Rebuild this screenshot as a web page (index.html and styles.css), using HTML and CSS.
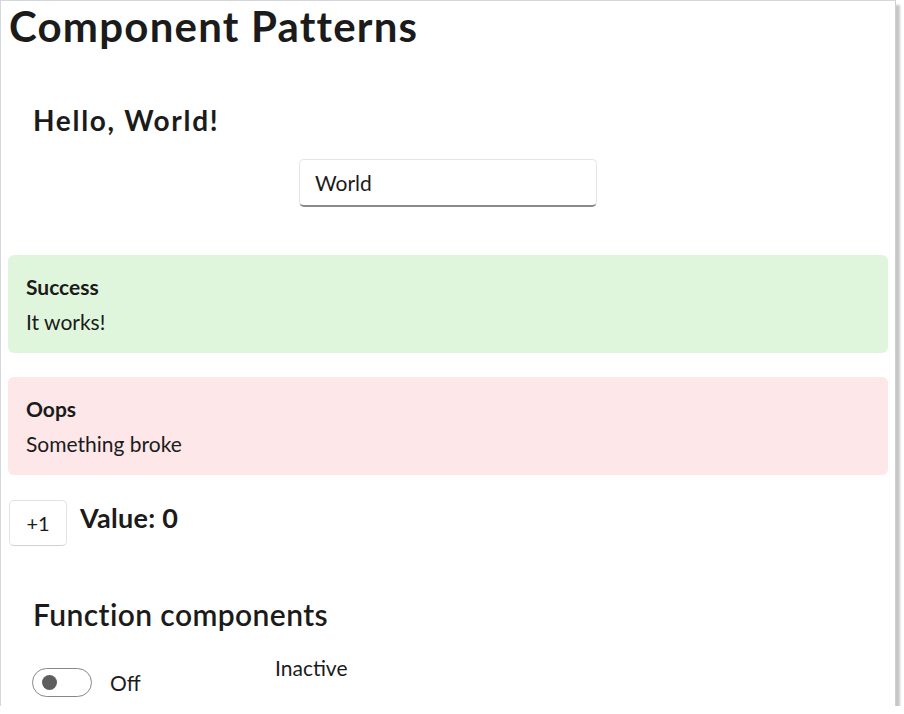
FILE: index.html
```html
<!DOCTYPE html>
<html lang="en">
<head>
    <meta charset="UTF-8">
    <meta name="viewport" content="width=device-width, initial-scale=1.0">
    <title>Component Patterns</title>
    <link rel="stylesheet" href="styles.css">
</head>
<body>

<div class="app-window">
    <h1 class="page-title">Component Patterns</h1>

    <!-- Greeting -->
    <div class="hello-panel">
        <h2 class="hello-title">Hello, World!</h2>
        <div class="text-box">World</div>
    </div>

    <!-- Info bars -->
    <div class="info-bar success">
        <div class="info-title">Success</div>
        <div class="info-message">It works!</div>
    </div>
    <div class="info-bar error">
        <div class="info-title">Oops</div>
        <div class="info-message">Something broke</div>
    </div>

    <!-- Counter -->
    <div class="counter-row">
        <button class="plain-btn">+1</button>
        <span class="counter-value">Value: 0</span>
    </div>

    <!-- Function components -->
    <div class="function-panel">
        <h2 class="section-title">Function components</h2>
        <div class="toggle-row">
            <div class="toggle-wrap">
                <span class="toggle"><span class="toggle-knob"></span></span>
                <span class="toggle-label">Off</span>
            </div>
            <span class="status-text">Inactive</span>
        </div>
    </div>
</div>

</body>
</html>
```

FILE: styles.css
```css
body {
  margin: 0;
  padding: 0;
  background-color: #fff;
  font-family: Lato, "Open Sans", sans-serif;
  color: #1b1b1b;
}

/* Window frame */
.app-window {
  width: 880px;
  height: 705px;
  padding: 0 7px;
  background-color: #fff;
  border-top: 1px solid #d3d6dd;
  border-left: 1px solid #d3d6dd;
  border-right: 1px solid #cfcfcf;
  box-shadow: 4px 5px 2px rgba(0, 0, 0, 0.22);
  overflow: hidden;
}

.page-title {
  margin: 0;
  padding-left: 1px;
  font-size: 42px;
  line-height: 50px;
  font-weight: bold;
  letter-spacing: 1.2px;
}

/* Greeting */
.hello-panel {
  padding: 51px 24px 0;
}

.hello-title {
  margin: 0 0 0 1px;
  font-size: 28px;
  line-height: 36px;
  font-weight: bold;
  letter-spacing: 1.7px;
}

.text-box {
  box-sizing: border-box;
  width: 298px;
  height: 48px;
  margin: 21px auto 0;
  padding: 0 15px;
  display: flex;
  align-items: center;
  font-size: 21px;
  background-color: #fff;
  border: 1px solid #e5e5e5;
  border-bottom: 2px solid #8a8a8a;
  border-radius: 5px;
}

/* Info bars */
.info-bar {
  margin-top: 48px;
  padding: 18px 18px 17px;
  border-radius: 6px;
  font-size: 21px;
  line-height: 28px;
}

.info-bar + .info-bar {
  margin-top: 24px;
}

.info-bar.success {
  background-color: #dff6dd;
}

.info-bar.error {
  background-color: #fde7e9;
}

.info-title {
  font-weight: bold;
}

.info-message {
  margin-top: 7px;
}

/* Counter */
.counter-row {
  display: flex;
  align-items: flex-start;
  gap: 13px;
  margin-top: 25px;
  padding-left: 1px;
}

.plain-btn {
  width: 58px;
  height: 46px;
  padding: 0;
  font-family: inherit;
  font-size: 20px;
  color: #1b1b1b;
  background-color: #fff;
  border: 1px solid #e3e3e3;
  border-bottom-color: #d0d0d0;
  border-radius: 5px;
}

.counter-value {
  font-size: 27px;
  line-height: 36px;
  font-weight: bold;
  letter-spacing: 0.3px;
}

/* Function components */
.function-panel {
  padding: 48px 24px 0 25px;
}

.section-title {
  margin: 0;
  font-size: 30px;
  line-height: 40px;
  font-weight: 600;
  letter-spacing: 0.4px;
}

.toggle-row {
  display: flex;
  align-items: flex-start;
  margin-top: 20px;
  font-size: 21px;
  line-height: 28px;
}

.toggle-wrap {
  width: 243px;
  margin-left: -1px;
  margin-top: 14px;
  display: flex;
  align-items: center;
  gap: 18px;
}

.toggle {
  box-sizing: border-box;
  width: 60px;
  height: 29px;
  border: 1px solid #878787;
  border-radius: 15px;
  display: flex;
  align-items: center;
  padding-left: 9px;
}

.toggle-knob {
  width: 15px;
  height: 15px;
  border-radius: 50%;
  background-color: #5e5e5e;
}
```
